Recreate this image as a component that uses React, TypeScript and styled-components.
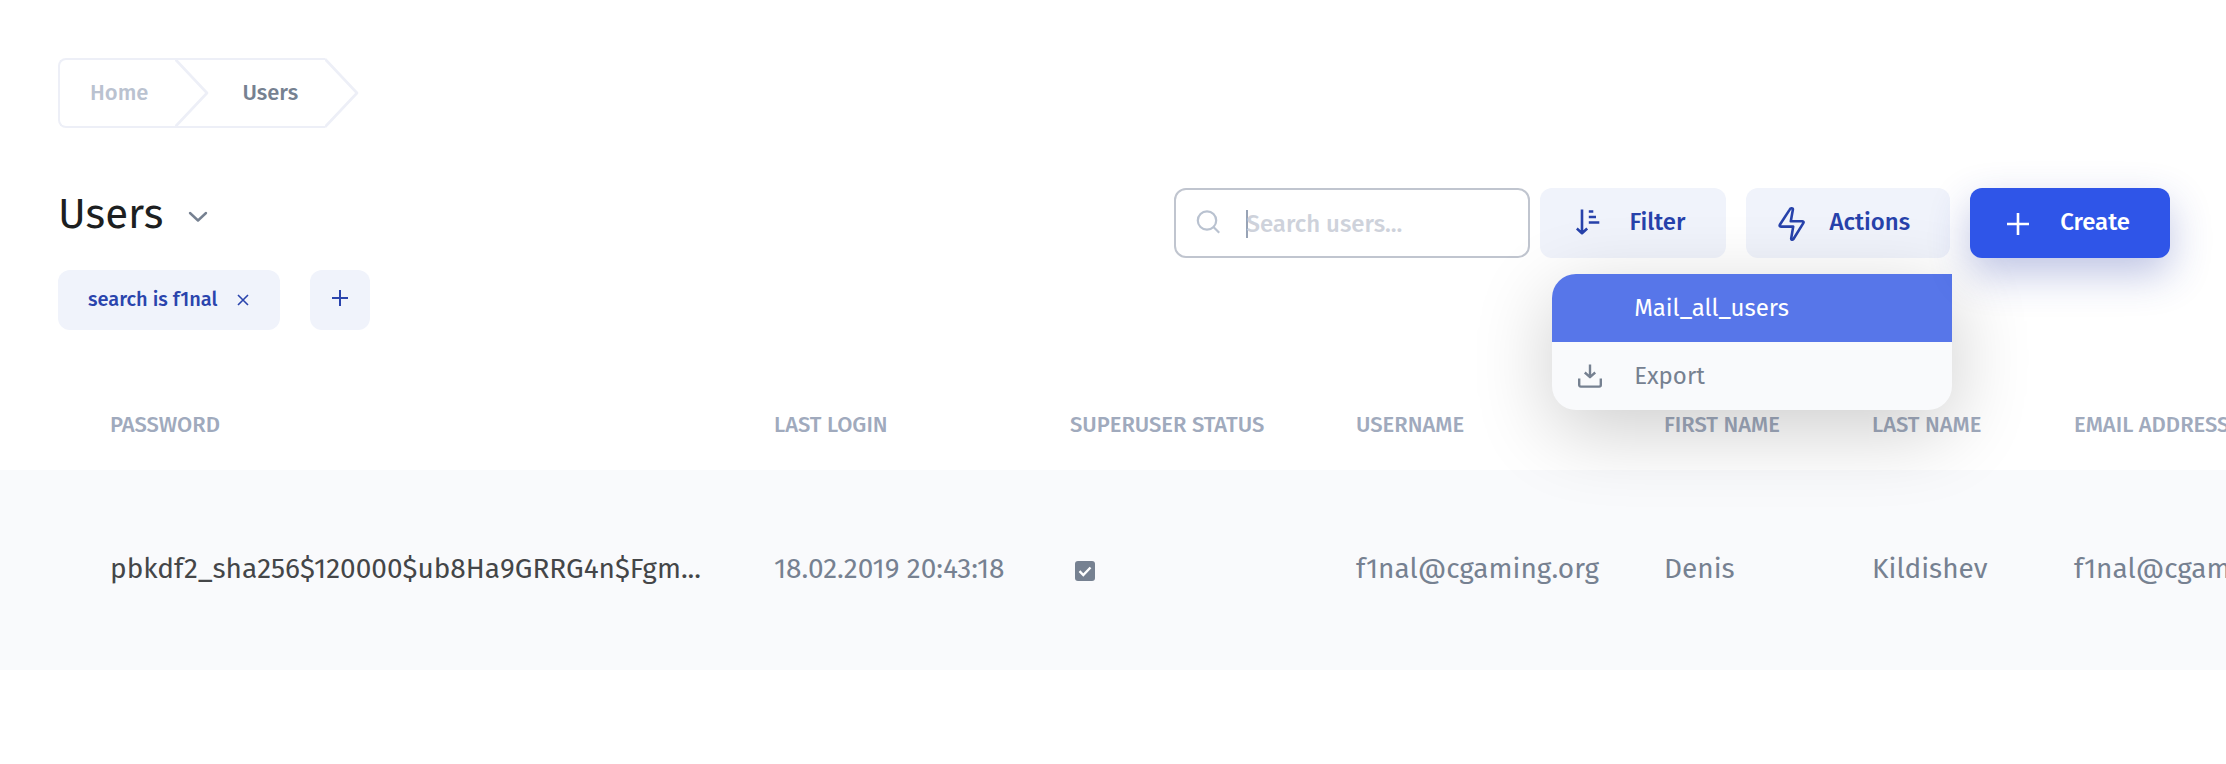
import React from "react";
import styled, { createGlobalStyle } from "styled-components";

const GlobalStyle = createGlobalStyle`
  *, *::before, *::after { box-sizing: border-box; }
  body {
    margin: 0;
    background: #ffffff;
    font-family: "Fira Sans", Roboto, "Noto Sans", sans-serif;
    color: #768191;
    overflow-x: hidden;
  }
  button, input { font-family: inherit; }
  button { cursor: pointer; }
  svg { flex-shrink: 0; }
`;

const Page = styled.main`
  padding-top: 58px;
  overflow: hidden;
`;

const Trail = styled.ol`
  display: flex;
  margin: 0 56px 0 58px;
  padding: 0;
  list-style: none;
`;

const Crumb = styled.li<{ $first?: boolean }>`
  position: relative;
  display: flex;
  align-items: center;
  height: 70px;
  padding: 0 27px 0 ${(p) => (p.$first ? 30 : 67)}px;
  border: 2px solid #edeff7;
  border-right: 0;
  border-left-width: ${(p) => (p.$first ? 2 : 0)}px;
  border-radius: ${(p) => (p.$first ? "8px 0 0 8px" : "0")};
`;

const CrumbLink = styled.a<{ $current?: boolean }>`
  font-size: 22px;
  font-weight: 500;
  line-height: 26px;
  text-decoration: none;
  color: ${(p) => (p.$current ? "#768191" : "#bac2d0")};
`;

const CrumbArrow = styled.svg`
  position: absolute;
  top: -2px;
  right: -34px;
  fill: none;
  stroke: #edeff7;
  stroke-width: 2.6;
  stroke-linejoin: round;
`;

const Header = styled.header`
  display: flex;
  justify-content: space-between;
  align-items: flex-start;
  margin: 60px 56px 0 58px;
`;

const TitleRow = styled.div`
  display: flex;
  align-items: center;
  gap: 26px;
  height: 50px;
  padding-top: 2px;
`;

const Title = styled.h1`
  margin: 0;
  font-size: 42px;
  font-weight: 400;
  line-height: 50px;
  color: #1d1f21;
`;

const PlainButton = styled.button`
  display: flex;
  padding: 6px 0 0;
  border: 0;
  background: none;
  color: inherit;
`;

const Chips = styled.div`
  display: flex;
  gap: 30px;
  margin-top: 32px;
`;

const Chip = styled.button<{ $square?: boolean }>`
  display: flex;
  align-items: center;
  justify-content: center;
  gap: 20px;
  height: 60px;
  min-width: 60px;
  padding: ${(p) => (p.$square ? "0 0 4px" : "0 31px 2px 30px")};
  border: 0;
  border-radius: 12px;
  background: #f0f3fb;
  color: #2a44ad;
  font-size: 20px;
  font-weight: 500;
  line-height: 24px;
`;

const RemoveIcon = styled.svg`
  margin-top: 2px;
`;

const Tools = styled.div`
  display: flex;
`;

const SearchBox = styled.label`
  display: flex;
  align-items: center;
  width: 356px;
  height: 70px;
  margin-right: 10px;
  padding: 2px 20px 0;
  border: 2px solid #c0c5cf;
  border-radius: 12px;
  color: #b9c2d0;
  & > svg { margin-bottom: 4px; }
`;

const Caret = styled.span`
  flex: none;
  width: 2px;
  height: 28px;
  margin: 0 -2px 0 26px;
  background: #98a3b5;
`;

const SearchInput = styled.input`
  flex: 1;
  min-width: 0;
  padding: 0;
  border: 0;
  outline: 0;
  background: transparent;
  font-size: 24px;
  font-weight: 500;
  line-height: 28px;
  color: #768191;
  &::placeholder { color: #ced2db; opacity: 1; }
`;

const ToolButton = styled.button<{ $primary?: boolean; $gap: number }>`
  position: relative;
  z-index: ${(p) => (p.$primary ? 2 : 0)};
  display: flex;
  align-items: center;
  gap: ${(p) => p.$gap}px;
  height: 70px;
  padding: 0 40px 2px 36px;
  border: 0;
  border-radius: 12px;
  background: ${(p) => (p.$primary ? "#2f55e8" : "#f0f3fb")};
  color: ${(p) => (p.$primary ? "#ffffff" : "#2742ab")};
  box-shadow: ${(p) => (p.$primary ? "0 16px 40px rgba(40, 58, 165, 0.3)" : "none")};
  font-size: 24px;
  font-weight: 500;
  line-height: 28px;
  & > svg { margin-top: ${(p) => (p.$primary ? 4 : 0)}px; }
`;

const ButtonGroup = styled.div`
  display: flex;
  gap: 20px;
`;

const MenuAnchor = styled.div`
  position: relative;
`;

const Menu = styled.div`
  position: absolute;
  z-index: 1;
  top: 86px;
  right: -2px;
  width: 400px;
  border-radius: 24px 0 24px 24px;
  overflow: hidden;
  background: #f9fafc;
  box-shadow: 0 20px 80px rgba(0, 0, 0, 0.2);
`;

const MenuItem = styled.button<{ $active?: boolean }>`
  display: grid;
  grid-template-columns: 24px 1fr;
  column-gap: 32px;
  align-items: center;
  width: 100%;
  height: 68px;
  padding: 0 26px;
  border: 0;
  background: ${(p) => (p.$active ? "#5776e9" : "transparent")};
  color: ${(p) => (p.$active ? "#ffffff" : "#768191")};
  font-size: 24px;
  line-height: 28px;
  text-align: left;
`;

const MenuLabel = styled.span`
  grid-column: 2;
`;

const TableScroll = styled.div`
  margin-top: 48px;
  overflow: hidden;
`;

const Table = styled.table`
  width: 100%;
  table-layout: fixed;
  border-collapse: collapse;
`;

const Column = styled.col<{ $width?: number }>`
  width: ${(p) => (p.$width ? `${p.$width}px` : "auto")};
`;

const HeadCell = styled.th`
  height: 92px;
  padding: 2px 0 0;
  text-align: left;
  white-space: nowrap;
  text-transform: uppercase;
  font-size: 22px;
  font-weight: 500;
  line-height: 26px;
  color: #a0aabd;
  &:first-child { padding-left: 110px; }
`;

const Row = styled.tr`
  background: #f9fafc;
`;

const Cell = styled.td`
  height: 200px;
  padding: 0 0 2px;
  white-space: nowrap;
  font-size: 28px;
  line-height: 34px;
  &:first-child {
    padding-left: 110px;
    color: #444648;
  }
`;

const StatusMark = styled.label`
  display: grid;
  width: max-content;
  margin: 4px 0 0 5px;
  & > * { grid-area: 1 / 1; }
`;

const StatusBox = styled.input`
  appearance: none;
  width: 20px;
  height: 20px;
  margin: 0;
  border-radius: 3px;
  background: #768191;
`;

const Check = styled.svg`
  pointer-events: none;
`;

const columns = [
  { label: "Password", width: 774 },
  { label: "Last login", width: 296 },
  { label: "Superuser status", width: 286 },
  { label: "Username", width: 308 },
  { label: "First name", width: 208 },
  { label: "Last name", width: 202 },
  { label: "Email address", width: undefined },
];

function ChevronIcon() {
  return (
    <svg width="18" height="10" viewBox="0 0 18 10" fill="none" stroke="#768191" strokeWidth="2.4" strokeLinecap="round" strokeLinejoin="round" overflow="visible">
      <path d="M1 1l8 7.500L17 1" />
    </svg>
  );
}

function SearchIcon() {
  return (
    <svg width="24" height="24" viewBox="0 0 24 24" fill="none" stroke="currentColor" strokeWidth="2.2">
      <circle cx="11" cy="10.500" r="9.200" />
      <path d="M17 16.500l6.200 6.200" />
    </svg>
  );
}

function PlusIcon({ size, stroke }: { size: number; stroke: number }) {
  const c = size / 2;
  return (
    <svg width={size} height={size} viewBox={`0 0 ${size} ${size}`} fill="none" stroke="currentColor" strokeWidth={stroke}>
      <path d={`M${c} 1v${size - 2}M1 ${c}h${size - 2}`} />
    </svg>
  );
}

function SortIcon() {
  return (
    <svg width="24" height="26" viewBox="0 0 24 26" fill="none" stroke="currentColor" strokeWidth="2.6">
      <path d="M6 0.500v24M0.800 19.500L6 24.200l5.200-4.700" strokeLinejoin="round" />
      <path d="M12.800 2.500h4.500M12.800 8h7.200M12.800 13.500h10.500" />
    </svg>
  );
}

function BoltIcon() {
  return (
    <svg width="24" height="34" viewBox="2 -2 24 34" fill="none" stroke="currentColor" strokeWidth="2.600" strokeLinejoin="round" overflow="visible">
      <path d="M11.300 1.300C12.500 1 13 1.500 12.900 2.600L10.800 14.300H22.500c1.200 0 1.300 1 .8 1.800L13.300 32.200c-.8 1-2.300.7-2.100-.8L13.200 19.600H1c-1.400 0-1.700-1-1-2.100L9.700 2.600c.4-.7.900-1.200 1.600-1.300z" />
    </svg>
  );
}

function ExportIcon() {
  return (
    <svg width="24" height="24" viewBox="0 0 24 24" fill="none" stroke="currentColor" strokeWidth="2.400" strokeLinejoin="round">
      <path d="M12 0.500v12.500M6.800 8.500L12 13.200l5.200-4.700M1.200 14.500V21a1.600 1.600 0 0 0 1.600 1.600h18.400a1.600 1.600 0 0 0 1.600-1.600v-6.500" />
    </svg>
  );
}

export default function App() {
  return (
    <>
      <GlobalStyle />
      <Page>
        <nav aria-label="Breadcrumb">
          <Trail>
            <Crumb $first>
              <CrumbLink href="#home">Home</CrumbLink>
              <CrumbArrow width="34" height="70" viewBox="0 0 34 70">
                <path d="M0 1l32 34L0 69" />
              </CrumbArrow>
            </Crumb>
            <Crumb>
              <CrumbLink href="#users" $current aria-current="page">Users</CrumbLink>
              <CrumbArrow width="34" height="70" viewBox="0 0 34 70">
                <path d="M0 1l32 34L0 69" />
              </CrumbArrow>
            </Crumb>
          </Trail>
        </nav>

        <Header>
          <div>
            <TitleRow>
              <Title>Users</Title>
              <PlainButton aria-label="Choose model"><ChevronIcon /></PlainButton>
            </TitleRow>
            <Chips>
              <Chip>
                search is f1nal
                <RemoveIcon width="12" height="12" viewBox="0 0 12 12" stroke="currentColor" strokeWidth="1.600">
                  <path d="M1 1l10 10M11 1L1 11" />
                </RemoveIcon>
              </Chip>
              <Chip $square aria-label="Add filter"><PlusIcon size={18} stroke={2} /></Chip>
            </Chips>
          </div>

          <Tools>
            <SearchBox>
              <SearchIcon />
              <Caret />
              <SearchInput type="text" placeholder="Search users..." aria-label="Search users" />
            </SearchBox>
            <ButtonGroup>
              <ToolButton $gap={29}><SortIcon />Filter</ToolButton>
              <MenuAnchor>
                <ToolButton $gap={24}><BoltIcon />Actions</ToolButton>
                <Menu role="menu">
                  <MenuItem role="menuitem" $active><MenuLabel>Mail_all_users</MenuLabel></MenuItem>
                  <MenuItem role="menuitem"><ExportIcon /><MenuLabel>Export</MenuLabel></MenuItem>
                </Menu>
              </MenuAnchor>
              <ToolButton $primary $gap={30}><PlusIcon size={24} stroke={2.6} />Create</ToolButton>
            </ButtonGroup>
          </Tools>
        </Header>

        <TableScroll>
          <Table>
            <colgroup>
              {columns.map((c) => <Column key={c.label} $width={c.width} />)}
            </colgroup>
            <thead>
              <tr>{columns.map((c) => <HeadCell key={c.label} scope="col">{c.label}</HeadCell>)}</tr>
            </thead>
            <tbody>
              <Row>
                <Cell>pbkdf2_sha256$120000$ub8Ha9GRRG4n$Fgm...</Cell>
                <Cell>18.02.2019 20:43:18</Cell>
                <Cell>
                  <StatusMark>
                    <StatusBox type="checkbox" defaultChecked aria-label="Superuser status" />
                    <Check width="20" height="20" viewBox="0 0 20 20" fill="none" stroke="#ffffff" strokeWidth="2.400">
                      <path d="M4.500 10.200l3.800 3.800 7.200-7.500" />
                    </Check>
                  </StatusMark>
                </Cell>
                <Cell>f1nal@cgaming.org</Cell>
                <Cell>Denis</Cell>
                <Cell>Kildishev</Cell>
                <Cell>f1nal@cgaming.org</Cell>
              </Row>
            </tbody>
          </Table>
        </TableScroll>
      </Page>
    </>
  );
}
